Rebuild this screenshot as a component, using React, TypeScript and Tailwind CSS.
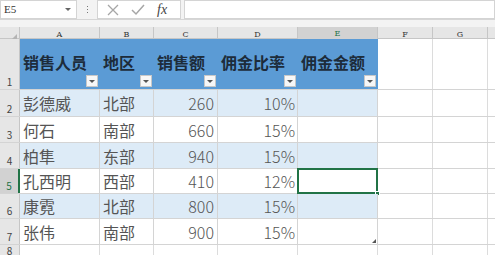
import { ReactNode } from 'react';

type Row = { name: string; area: string; sales: string; rate: string };

const rows: Row[] = [
  { name: '彭德威', area: '北部', sales: '260', rate: '10%' },
  { name: '何石', area: '南部', sales: '660', rate: '15%' },
  { name: '柏隼', area: '东部', sales: '940', rate: '15%' },
  { name: '孔西明', area: '西部', sales: '410', rate: '12%' },
  { name: '康霓', area: '北部', sales: '800', rate: '15%' },
  { name: '张伟', area: '南部', sales: '900', rate: '15%' },
];

const rowHeights = ['h-[27px]', 'h-[26px]', 'h-[26px]', 'h-[25px]', 'h-[25px]', 'h-[26px]'];

const cols = 'grid grid-cols-[20px_80px_54px_64px_80px_80px_55px_55px_1fr]';

function FilterBtn() {
  return (
    <div className="w-[12px] h-[12px] bg-[#f7f7f7] border border-[#c8c8c8] flex items-center justify-center">
      <div className="w-0 h-0 border-l-[3px] border-r-[3px] border-t-[3px] border-l-transparent border-r-transparent border-t-[#555]" />
    </div>
  );
}

function HeadCell({ children }: { children: ReactNode }) {
  return (
    <div className="bg-[#5b9bd5] flex flex-col justify-between pl-[3px] pr-[2px] pt-[13px] pb-[2px]">
      <span className="text-[16px] font-bold text-[#1d2c3b] leading-[20px] whitespace-nowrap">{children}</span>
      <div className="flex justify-end">
        <FilterBtn />
      </div>
    </div>
  );
}

export default function App() {
  return (
    <div
      className="w-[495px] h-[255px] overflow-hidden bg-white relative"
      style={{ fontFamily: '"Noto Sans CJK SC", "Liberation Sans", sans-serif' }}
    >
      {/* formula bar */}
      <div className="h-[20px] bg-[#f3f3f3] flex items-center gap-[0px] border-b border-[#d6d6d6]">
        <div className="w-[77px] h-[19px] bg-white border border-[#d4d4d4] flex items-center justify-between pl-[3px] pr-[5px]">
          <span className="text-[11px] text-[#333] leading-none" style={{ fontFamily: '"Liberation Serif", serif' }}>E5</span>
          <div className="w-0 h-0 border-l-[3px] border-r-[3px] border-t-[3px] border-l-transparent border-r-transparent border-t-[#666]" />
        </div>
        <div className="w-[20px] flex flex-col items-center gap-[2px]">
          <div className="w-[1px] h-[1px] bg-[#777]" />
          <div className="w-[1px] h-[1px] bg-[#777]" />
          <div className="w-[1px] h-[1px] bg-[#777]" />
        </div>
        <div className="w-[84px] h-[19px] bg-white border border-[#d4d4d4] flex items-center pl-[9px] gap-[12px]">
          <svg width="12" height="12" viewBox="0 0 12 12">
            <path d="M1 1 L11 11 M11 1 L1 11" stroke="#a6a6a6" strokeWidth="1.3" fill="none" />
          </svg>
          <svg width="14" height="12" viewBox="0 0 14 12">
            <path d="M1 6 L5 10 L13 1" stroke="#a6a6a6" strokeWidth="1.5" fill="none" />
          </svg>
          <span className="text-[14px] italic text-[#444] leading-none" style={{ fontFamily: '"Liberation Serif", serif' }}>fx</span>
        </div>
        <div className="flex-1 h-[19px] bg-white border border-[#d4d4d4] ml-[3px]" />
      </div>
      <div className="h-[7px] bg-[#f3f3f3]" />

      {/* column headers */}
      <div className={`${cols} h-[12px] bg-[#e6e6e6] border-b border-[#c6c6c6] text-[8px] text-[#333]`} style={{ fontFamily: '"DejaVu Serif", serif' }}>
        <div className="border-r border-[#c6c6c6] flex items-end justify-end pr-[2px] pb-[1px]">
          <div className="w-0 h-0 border-l-[7px] border-t-[7px] border-l-transparent border-t-transparent border-b-0 border-r-[0px]" style={{ borderBottom: '7px solid #b4b4b4', borderLeft: '7px solid transparent' }} />
        </div>
        {['A', 'B', 'C', 'D'].map((c) => (
          <div key={c} className="border-r border-[#c6c6c6] flex items-center justify-center leading-none">{c}</div>
        ))}
        <div className="bg-[#d2d2d2] border-r border-[#c6c6c6] border-b-2 border-b-[#217346] flex items-center justify-center leading-none text-[#217346]">E</div>
        <div className="border-r border-[#c6c6c6] flex items-center justify-center leading-none">F</div>
        <div className="border-r border-[#c6c6c6] flex items-center justify-center leading-none">G</div>
        <div />
      </div>

      {/* header row */}
      <div className={`${cols} h-[51px] border-b border-[#d4d4d4]`}>
        <div className="bg-[#e6e6e6] border-r border-[#c6c6c6] flex items-end justify-center pb-[2px] text-[10px] text-[#444] leading-none">1</div>
        <HeadCell>销售人员</HeadCell>
        <HeadCell>地区</HeadCell>
        <HeadCell>销售额</HeadCell>
        <HeadCell>佣金比率</HeadCell>
        <HeadCell>佣金金额</HeadCell>
        <div className="border-r border-[#dcdcdc]" />
        <div className="border-r border-[#dcdcdc]" />
        <div />
      </div>

      {rows.map((r, i) => {
        const band = i % 2 === 0 ? 'bg-[#ddebf7]' : 'bg-white';
        const sel = i === 3;
        return (
          <div key={i} className={`${cols} ${rowHeights[i]} border-b border-[#d4d4d4] text-[16px] text-[#555] leading-none`}>
            <div
              className={`border-r flex items-end justify-center pb-[2px] text-[10px] leading-none ${
                sel ? 'bg-[#d2d2d2] border-r-2 border-r-[#217346] text-[#217346]' : 'bg-[#e6e6e6] border-[#c6c6c6] text-[#444]'
              }`}
            >
              {i + 2}
            </div>
            <div className={`${band} border-r border-[#d4d4d4] flex items-center pl-[3px]`}>{r.name}</div>
            <div className={`${band} border-r border-[#d4d4d4] flex items-center pl-[3px]`}>{r.area}</div>
            <div className={`${band} border-r border-[#d4d4d4] flex items-center justify-end pr-[3px] font-light`}>{r.sales}</div>
            <div className={`${band} border-r border-[#d4d4d4] flex items-center justify-end pr-[2px] font-light`}>{r.rate}</div>
            <div className={`${band} border-r border-[#d4d4d4] relative`}>
              {sel && (
                <div className="absolute left-[-1px] top-[-1px] right-[-1px] bottom-[-1px] border-2 border-[#217346]">
                  <div className="absolute right-[-4px] bottom-[-4px] w-[5px] h-[5px] bg-[#217346] border border-white" />
                </div>
              )}
              {i === 5 && (
                <div className="absolute right-[1px] bottom-[1px] w-0 h-0" style={{ borderBottom: '4px solid #555', borderLeft: '4px solid transparent' }} />
              )}
            </div>
            <div className="border-r border-[#dcdcdc]" />
            <div className="border-r border-[#dcdcdc]" />
            <div />
          </div>
        );
      })}

      <div className={`${cols} h-[12px] border-b border-[#d4d4d4]`}>
        <div className="bg-[#e6e6e6] border-r border-[#c6c6c6] flex items-end justify-center text-[10px] text-[#444] leading-none">8</div>
        <div className="border-r border-[#dcdcdc]" />
        <div className="border-r border-[#dcdcdc]" />
        <div className="border-r border-[#dcdcdc]" />
        <div className="border-r border-[#dcdcdc]" />
        <div className="border-r border-[#dcdcdc]" />
        <div className="border-r border-[#dcdcdc]" />
        <div className="border-r border-[#dcdcdc]" />
        <div />
      </div>
    </div>
  );
}
